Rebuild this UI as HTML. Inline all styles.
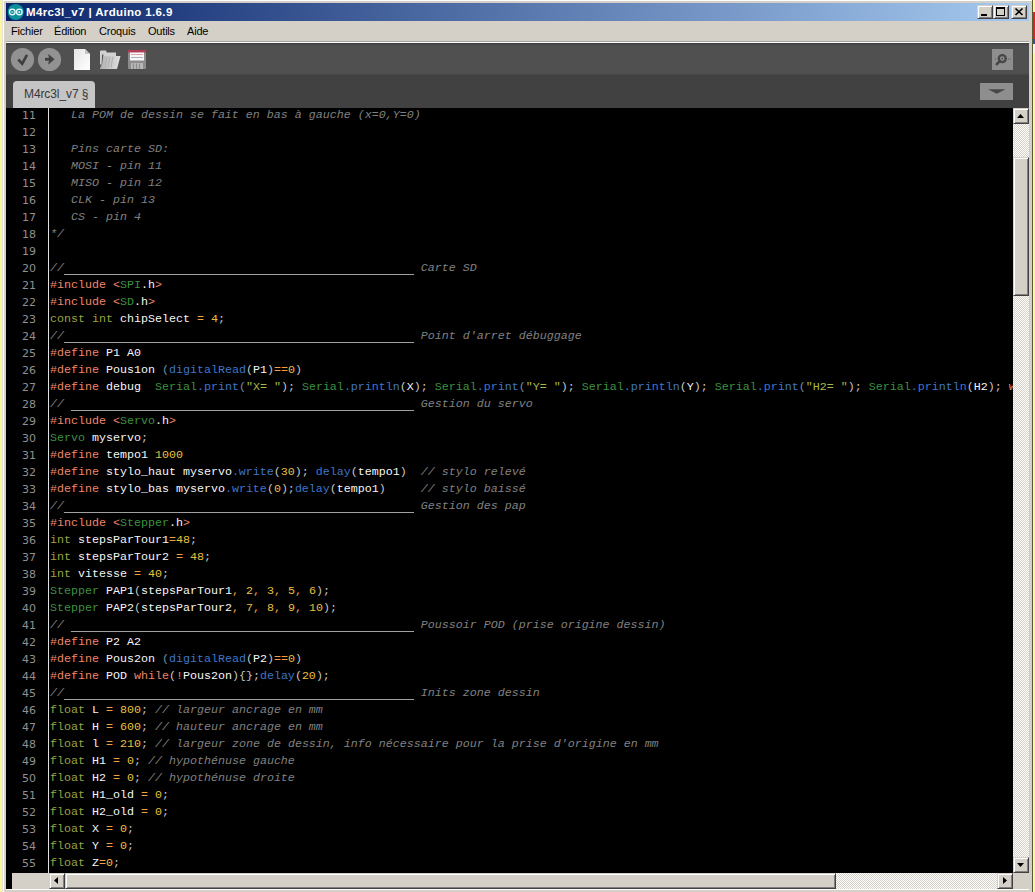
<!DOCTYPE html>
<html><head><meta charset="utf-8"><title>M4rc3l_v7 | Arduino 1.6.9</title>
<style>
html,body{margin:0;padding:0;}
body{width:1035px;height:892px;overflow:hidden;background:#fdf8a0;position:relative;font-family:"Liberation Sans",sans-serif;}
.abs{position:absolute;}
#win{left:2px;top:0;width:1031px;height:892px;background:#d4d0c8;}
#winhl{left:2px;top:-1px;width:1031px;height:894px;box-sizing:border-box;border-left:1px solid #e6e3d8;border-right:1px solid #5a5a30;}
#winhl2{left:3px;top:0;width:1029px;height:892px;box-sizing:border-box;border-left:1px solid #fff;border-top:1px solid #fff;}
#title{left:6px;top:3px;width:1023px;height:18px;background:linear-gradient(90deg,#0a246a 0%,#a6caf0 100%);}
#ttext{left:26px;top:3px;height:18px;line-height:18px;color:#fff;font-weight:bold;font-size:11.5px;letter-spacing:.36px;white-space:nowrap;}
.mi{position:absolute;top:24px;font-size:11px;line-height:14px;color:#000;white-space:nowrap;letter-spacing:-.2px;}
#sep1{left:6px;top:41px;width:1023px;height:1px;background:#a8a6a0;}
#sep2{left:6px;top:42px;width:1023px;height:1px;background:#fff;}
#tool{left:6px;top:43px;width:1023px;height:32px;background:linear-gradient(180deg,#404040 0,#4b4b4b 2px,#505050 3px,#505050 30px,#4a4a4a 31px,#464646 32px);}
#tabs{left:6px;top:75px;width:1023px;height:33px;background:#414141;}
#tab{left:13px;top:81px;width:82px;height:27px;background:#c5c5c5;border-radius:4px 4px 0 0;}
#tabt{left:24px;top:86px;font-size:12px;line-height:16px;color:#383838;white-space:nowrap;letter-spacing:-.1px;}
#ed{left:6px;top:108px;width:1007px;height:765px;background:#000;overflow:hidden;}
#edl{left:6px;top:873px;width:6px;height:16px;background:#000;}
#vline{left:48px;top:108px;width:1px;height:765px;background:#e0e0e0;}
.ln{position:relative;height:17px;line-height:17px;white-space:pre;font-family:"Liberation Mono",monospace;font-size:11.667px;}
.no{position:absolute;left:0;width:30px;top:-1px;text-align:right;color:#909090;font-family:"DejaVu Sans",sans-serif;font-size:11px;}
.cd{position:absolute;left:44px;top:-1px;}
.c{color:#808080;font-style:italic;}
.u{position:relative;top:3px;color:#a0a0a0;font-style:normal;background:linear-gradient(#a4a4a4,#a4a4a4) no-repeat 0 10px/100% 1px;}
.p{color:#f0866a;}
.k{color:#3d9140;}
.w{color:#f6f6f6;}
.b{color:#c6c6c6;}
.t{color:#98a440;}
.o{color:#f0a040;}
.n{color:#e8c040;}
.f{color:#3f76c8;}
.g{color:#6f8fa8;}
.s{color:#a8b84a;}
/* scrollbars */
.track{background-color:#ebe9e3;background-image:conic-gradient(#fff 25%,#d4d0c8 0 50%,#fff 0 75%,#d4d0c8 0);background-size:2px 2px;}
.btn{background:#d4d0c8;box-sizing:border-box;border:1px solid;border-color:#d4d0c8 #404040 #404040 #d4d0c8;box-shadow:inset 1px 1px 0 #fff, inset -1px -1px 0 #808080;}
</style></head><body>
<div class="abs" id="win"></div>
<div class="abs" id="winhl"></div>
<div class="abs" id="winhl2"></div>
<!-- bits of the window behind, right edge -->
<div class="abs" style="left:1033px;top:12px;width:2px;height:27px;background:#e02028"></div>
<div class="abs" style="left:1033px;top:39px;width:2px;height:5px;background:#3050a0"></div>
<div class="abs" style="left:1033px;top:44px;width:2px;height:9px;background:#f4f4f4"></div>
<div class="abs" id="title"></div>
<svg class="abs" style="left:7px;top:4px" width="17" height="16" viewBox="0 0 17 16"><circle cx="8.7" cy="8" r="8" fill="#0d8f9b"/><g fill="none" stroke="#e8ffff" stroke-width="1.3"><circle cx="5.3" cy="8" r="2.8"/><circle cx="12.3" cy="8" r="2.8"/></g><g stroke="#e8ffff" stroke-width=".9"><path d="M4.200 8h2.200M11.200 8h2.200M12.300 6.900v2.200"/></g></svg>
<div class="abs" id="ttext">M4rc3l_v7 | Arduino 1.6.9</div>
<!-- caption buttons -->
<div class="abs btn" style="left:977px;top:5px;width:16px;height:14px;"></div>
<div class="abs" style="left:981px;top:14px;width:6px;height:2px;background:#000"></div>
<div class="abs btn" style="left:993px;top:5px;width:16px;height:14px;"></div>
<div class="abs" style="left:996px;top:7px;width:9px;height:9px;box-sizing:border-box;border:1px solid #000;border-top-width:2px;"></div>
<div class="abs btn" style="left:1011px;top:5px;width:16px;height:14px;"></div>
<svg class="abs" style="left:1011px;top:5px" width="16" height="14" viewBox="0 0 16 14"><path d="M4.500 3.500l7 6.500M11.500 3.500l-7 6.500" stroke="#000" stroke-width="1.7" fill="none"/></svg>

<div class="mi" style="left:11px">Fichier</div>
<div class="mi" style="left:54px">Édition</div>
<div class="mi" style="left:99px">Croquis</div>
<div class="mi" style="left:148px">Outils</div>
<div class="mi" style="left:187px">Aide</div>
<div class="abs" id="sep1"></div><div class="abs" id="sep2"></div>
<div class="abs" id="tool"></div>
<div class="abs" id="tabs"></div>
<!-- toolbar icons -->
<svg class="abs" style="left:6px;top:43px" width="160" height="32" viewBox="0 0 160 32">
<defs><linearGradient id="dg" x1="0" y1="0" x2="1" y2="1"><stop offset="0" stop-color="#e6e6e6"/><stop offset="1" stop-color="#ffffff"/></linearGradient>
<linearGradient id="fg" x1="0" y1="0" x2="1" y2="0"><stop offset="0" stop-color="#b2b2b2"/><stop offset="1" stop-color="#e0e0e0"/></linearGradient></defs>
<circle cx="16.500" cy="16.500" r="11.600" fill="#929292"/><path d="M12.300 16.500l3.900 4.200l4.800-8.800" fill="none" stroke="#404040" stroke-width="2.700"/>
<circle cx="43.500" cy="16.500" r="11.600" fill="#929292"/><path d="M39 16.300h5.500" stroke="#404040" stroke-width="2.800" fill="none"/><path d="M42.600 11.600l5.600 4.700l-5.600 4.700l1-4.700z" fill="#404040" stroke="#404040" stroke-width=".6"/>
<path d="M68 6h11l5 5v16h-16z" fill="url(#dg)"/><path d="M79 6l5 5h-5z" fill="#c4c4c4"/>
<path d="M94 8.500q0-1 1-1h4.500q1 0 1 1v1h9.500v12h-16z" fill="#d2d2d2"/><path d="M97.500 13h17l-3.500 13h-17z" fill="url(#fg)"/><path d="M96 11.500l1.500 0l-2 13.500z" fill="#555"/><path d="M101 14.500l-2 10M104 14l-2 10.500M107 13.500l-2 11" stroke="#b0b0b0" stroke-width="1.100"/>
<rect x="122" y="7" width="18" height="19" rx="1" fill="#8c8c8c"/><rect x="122" y="7" width="18" height="2.500" fill="#b43a55"/><rect x="124" y="9.500" width="14" height="8" fill="#f6f6f6"/><rect x="125" y="11" width="12" height="1" fill="#e8a0a8"/><rect x="125" y="14" width="12" height="1" fill="#a8b0c0"/><rect x="125" y="20" width="12" height="6" fill="#b8b8b8"/><path d="M127.500 20.500v5.500M130.500 20.500v5.500M133.500 20.500v5.500" stroke="#8c8c8c" stroke-width="1.200"/>
</svg>
<!-- serial monitor -->
<div class="abs" style="left:992px;top:49px;width:21px;height:21px;background:#8e8e8e"></div>
<svg class="abs" style="left:992px;top:49px" width="21" height="21" viewBox="0 0 21 21"><circle cx="10.300" cy="9.600" r="3.500" fill="none" stroke="#474747" stroke-width="2.300"/><circle cx="10.300" cy="9.600" r="0.900" fill="#474747"/><path d="M7.800 12.200l-3 3" stroke="#474747" stroke-width="2.600" stroke-linecap="round"/><path d="M16 10h1M18 10h1M3 10h1" stroke="#5a5a5a" stroke-width="1"/></svg>
<!-- tab dropdown -->
<div class="abs" style="left:980px;top:83px;width:33px;height:17px;background:#8e8e8e"></div>
<svg class="abs" style="left:980px;top:83px" width="33" height="17" viewBox="0 0 33 17"><path d="M8 6.200h17.500l-8.750 4.600z" fill="#474747"/></svg>
<div class="abs" id="tab"></div>
<div class="abs" id="tabt">M4rc3l_v7 §</div>
<div class="abs" id="ed">
<div class="ln"><span class="no">11</span><span class="cd"><span class="c">   La POM de dessin se fait en bas à gauche (x=0,Y=0)</span></span></div>
<div class="ln"><span class="no">12</span><span class="cd"></span></div>
<div class="ln"><span class="no">13</span><span class="cd"><span class="c">   Pins carte SD:</span></span></div>
<div class="ln"><span class="no">14</span><span class="cd"><span class="c">   MOSI - pin 11</span></span></div>
<div class="ln"><span class="no">15</span><span class="cd"><span class="c">   MISO - pin 12</span></span></div>
<div class="ln"><span class="no">16</span><span class="cd"><span class="c">   CLK - pin 13</span></span></div>
<div class="ln"><span class="no">17</span><span class="cd"><span class="c">   CS - pin 4</span></span></div>
<div class="ln"><span class="no">18</span><span class="cd"><span class="c">*/</span></span></div>
<div class="ln"><span class="no">19</span><span class="cd"></span></div>
<div class="ln"><span class="no">20</span><span class="cd"><span class="c">//<span class="u">__________________________________________________</span> Carte SD</span></span></div>
<div class="ln"><span class="no">21</span><span class="cd"><span class="p">#include &lt;</span><span class="k">SPI</span><span class="w">.h</span><span class="p">&gt;</span></span></div>
<div class="ln"><span class="no">22</span><span class="cd"><span class="p">#include &lt;</span><span class="k">SD</span><span class="w">.h</span><span class="p">&gt;</span></span></div>
<div class="ln"><span class="no">23</span><span class="cd"><span class="t">const int</span><span class="w"> chipSelect </span><span class="o">=</span><span class="w"> </span><span class="n">4</span><span class="b">;</span></span></div>
<div class="ln"><span class="no">24</span><span class="cd"><span class="c">//<span class="u">__________________________________________________</span> Point d&#x27;arret débuggage</span></span></div>
<div class="ln"><span class="no">25</span><span class="cd"><span class="p">#define</span><span class="w"> P1 A0</span></span></div>
<div class="ln"><span class="no">26</span><span class="cd"><span class="p">#define</span><span class="w"> Pous1on </span><span class="g">(</span><span class="f">digitalRead</span><span class="b">(</span><span class="w">P1</span><span class="b">)</span><span class="o">==</span><span class="n">0</span><span class="b">)</span></span></div>
<div class="ln"><span class="no">27</span><span class="cd"><span class="p">#define</span><span class="w"> debug  </span><span class="k">Serial</span><span class="f">.print</span><span class="g">(</span><span class="s">"X= "</span><span class="b">);</span><span class="w"> </span><span class="k">Serial</span><span class="f">.println</span><span class="b">(</span><span class="w">X</span><span class="b">);</span><span class="w"> </span><span class="k">Serial</span><span class="f">.print</span><span class="g">(</span><span class="s">"Y= "</span><span class="b">);</span><span class="w"> </span><span class="k">Serial</span><span class="f">.println</span><span class="b">(</span><span class="w">Y</span><span class="b">);</span><span class="w"> </span><span class="k">Serial</span><span class="f">.print</span><span class="g">(</span><span class="s">"H2= "</span><span class="b">);</span><span class="w"> </span><span class="k">Serial</span><span class="f">.println</span><span class="b">(</span><span class="w">H2</span><span class="b">);</span><span class="w"> </span><span class="p">w</span></span></div>
<div class="ln"><span class="no">28</span><span class="cd"><span class="c">// <span class="u">_________________________________________________</span> Gestion du servo</span></span></div>
<div class="ln"><span class="no">29</span><span class="cd"><span class="p">#include &lt;</span><span class="k">Servo</span><span class="w">.h</span><span class="p">&gt;</span></span></div>
<div class="ln"><span class="no">30</span><span class="cd"><span class="k">Servo</span><span class="w"> myservo</span><span class="b">;</span></span></div>
<div class="ln"><span class="no">31</span><span class="cd"><span class="p">#define</span><span class="w"> tempo1 </span><span class="n">1000</span></span></div>
<div class="ln"><span class="no">32</span><span class="cd"><span class="p">#define</span><span class="w"> stylo_haut myservo</span><span class="f">.write</span><span class="b">(</span><span class="n">30</span><span class="b">);</span><span class="w"> </span><span class="f">delay</span><span class="b">(</span><span class="w">tempo1</span><span class="b">)</span><span class="w">  </span><span class="c">// stylo relevé</span></span></div>
<div class="ln"><span class="no">33</span><span class="cd"><span class="p">#define</span><span class="w"> stylo_bas myservo</span><span class="f">.write</span><span class="b">(</span><span class="n">0</span><span class="b">);</span><span class="f">delay</span><span class="b">(</span><span class="w">tempo1</span><span class="b">)</span><span class="w">     </span><span class="c">// stylo baissé</span></span></div>
<div class="ln"><span class="no">34</span><span class="cd"><span class="c">//<span class="u">__________________________________________________</span> Gestion des pap</span></span></div>
<div class="ln"><span class="no">35</span><span class="cd"><span class="p">#include &lt;</span><span class="k">Stepper</span><span class="w">.h</span><span class="p">&gt;</span></span></div>
<div class="ln"><span class="no">36</span><span class="cd"><span class="t">int</span><span class="w"> stepsParTour1</span><span class="o">=</span><span class="n">48</span><span class="b">;</span></span></div>
<div class="ln"><span class="no">37</span><span class="cd"><span class="t">int</span><span class="w"> stepsParTour2 </span><span class="o">=</span><span class="w"> </span><span class="n">48</span><span class="b">;</span></span></div>
<div class="ln"><span class="no">38</span><span class="cd"><span class="t">int</span><span class="w"> vitesse </span><span class="o">=</span><span class="w"> </span><span class="n">40</span><span class="b">;</span></span></div>
<div class="ln"><span class="no">39</span><span class="cd"><span class="k">Stepper</span><span class="w"> PAP1</span><span class="b">(</span><span class="w">stepsParTour1</span><span class="o">,</span><span class="w"> </span><span class="n">2</span><span class="o">,</span><span class="w"> </span><span class="n">3</span><span class="o">,</span><span class="w"> </span><span class="n">5</span><span class="o">,</span><span class="w"> </span><span class="n">6</span><span class="b">);</span></span></div>
<div class="ln"><span class="no">40</span><span class="cd"><span class="k">Stepper</span><span class="w"> PAP2</span><span class="b">(</span><span class="w">stepsParTour2</span><span class="o">,</span><span class="w"> </span><span class="n">7</span><span class="o">,</span><span class="w"> </span><span class="n">8</span><span class="o">,</span><span class="w"> </span><span class="n">9</span><span class="o">,</span><span class="w"> </span><span class="n">10</span><span class="b">);</span></span></div>
<div class="ln"><span class="no">41</span><span class="cd"><span class="c">// <span class="u">_________________________________________________</span> Poussoir POD (prise origine dessin)</span></span></div>
<div class="ln"><span class="no">42</span><span class="cd"><span class="p">#define</span><span class="w"> P2 A2</span></span></div>
<div class="ln"><span class="no">43</span><span class="cd"><span class="p">#define</span><span class="w"> Pous2on </span><span class="g">(</span><span class="f">digitalRead</span><span class="b">(</span><span class="w">P2</span><span class="b">)</span><span class="o">==</span><span class="n">0</span><span class="b">)</span></span></div>
<div class="ln"><span class="no">44</span><span class="cd"><span class="p">#define</span><span class="w"> POD </span><span class="p">while</span><span class="b">(</span><span class="p">!</span><span class="w">Pous2on</span><span class="b">){};</span><span class="f">delay</span><span class="b">(</span><span class="n">20</span><span class="b">);</span></span></div>
<div class="ln"><span class="no">45</span><span class="cd"><span class="c">//<span class="u">__________________________________________________</span> Inits zone dessin</span></span></div>
<div class="ln"><span class="no">46</span><span class="cd"><span class="t">float</span><span class="w"> L </span><span class="o">=</span><span class="w"> </span><span class="n">800</span><span class="b">;</span><span class="w"> </span><span class="c">// largeur ancrage en mm</span></span></div>
<div class="ln"><span class="no">47</span><span class="cd"><span class="t">float</span><span class="w"> H </span><span class="o">=</span><span class="w"> </span><span class="n">600</span><span class="b">;</span><span class="w"> </span><span class="c">// hauteur ancrage en mm</span></span></div>
<div class="ln"><span class="no">48</span><span class="cd"><span class="t">float</span><span class="w"> l </span><span class="o">=</span><span class="w"> </span><span class="n">210</span><span class="b">;</span><span class="w"> </span><span class="c">// largeur zone de dessin, info nécessaire pour la prise d'origine en mm</span></span></div>
<div class="ln"><span class="no">49</span><span class="cd"><span class="t">float</span><span class="w"> H1 </span><span class="o">=</span><span class="w"> </span><span class="n">0</span><span class="b">;</span><span class="w"> </span><span class="c">// hypothénuse gauche</span></span></div>
<div class="ln"><span class="no">50</span><span class="cd"><span class="t">float</span><span class="w"> H2 </span><span class="o">=</span><span class="w"> </span><span class="n">0</span><span class="b">;</span><span class="w"> </span><span class="c">// hypothénuse droite</span></span></div>
<div class="ln"><span class="no">51</span><span class="cd"><span class="t">float</span><span class="w"> H1_old </span><span class="o">=</span><span class="w"> </span><span class="n">0</span><span class="b">;</span></span></div>
<div class="ln"><span class="no">52</span><span class="cd"><span class="t">float</span><span class="w"> H2_old </span><span class="o">=</span><span class="w"> </span><span class="n">0</span><span class="b">;</span></span></div>
<div class="ln"><span class="no">53</span><span class="cd"><span class="t">float</span><span class="w"> X </span><span class="o">=</span><span class="w"> </span><span class="n">0</span><span class="b">;</span></span></div>
<div class="ln"><span class="no">54</span><span class="cd"><span class="t">float</span><span class="w"> Y </span><span class="o">=</span><span class="w"> </span><span class="n">0</span><span class="b">;</span></span></div>
<div class="ln"><span class="no">55</span><span class="cd"><span class="t">float</span><span class="w"> Z</span><span class="o">=</span><span class="n">0</span><span class="b">;</span></span></div>
</div>
<div class="abs" id="vline"></div>
<div class="abs" id="edl"></div>
<!-- vertical scrollbar -->
<div class="abs track" style="left:1013px;top:108px;width:16px;height:765px;"></div>
<div class="abs btn" style="left:1013px;top:108px;width:16px;height:16px;"></div>
<svg class="abs" style="left:1013px;top:108px" width="16" height="16"><path d="M4 10h7l-3.500-4z" fill="#000"/></svg>
<div class="abs btn" style="left:1013px;top:157px;width:16px;height:139px;"></div>
<div class="abs btn" style="left:1013px;top:857px;width:16px;height:16px;"></div>
<svg class="abs" style="left:1013px;top:857px" width="16" height="16"><path d="M4 6h7l-3.500 4z" fill="#000"/></svg>
<!-- horizontal scrollbar -->
<div class="abs" style="left:12px;top:873px;width:37px;height:16px;background:#d4d0c8"></div>
<div class="abs track" style="left:49px;top:873px;width:964px;height:16px;"></div>
<div class="abs btn" style="left:49px;top:873px;width:16px;height:16px;"></div>
<svg class="abs" style="left:49px;top:873px" width="16" height="16"><path d="M9 4v7l-4-3.500z" fill="#000"/></svg>
<div class="abs btn" style="left:65px;top:873px;width:771px;height:16px;"></div>
<div class="abs btn" style="left:997px;top:873px;width:16px;height:16px;"></div>
<svg class="abs" style="left:997px;top:873px" width="16" height="16"><path d="M6 4v7l4-3.500z" fill="#000"/></svg>
<div class="abs" style="left:1013px;top:873px;width:16px;height:16px;background:#d4d0c8"></div>
<div class="abs" style="left:6px;top:889px;width:1023px;height:1px;background:#fff"></div>
</body></html>
